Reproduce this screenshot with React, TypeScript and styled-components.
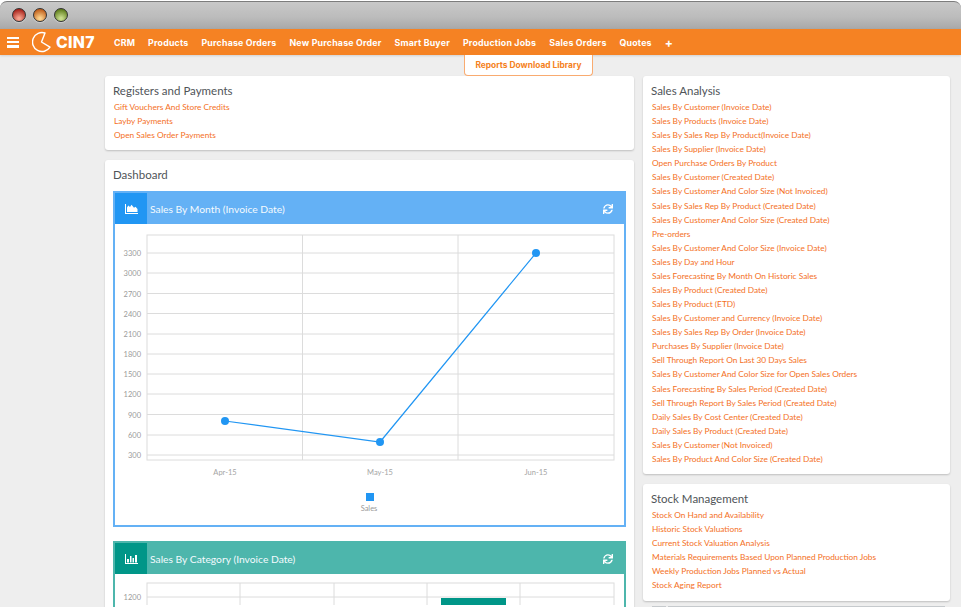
import React from "react";
import styled, { createGlobalStyle } from "styled-components";
import { FaSync } from "react-icons/fa";

const Global = createGlobalStyle`
  html, body { margin: 0; padding: 0; height: 607px; overflow: hidden; background: #ffffff; }
  body { font-family: "Lato", "Liberation Sans", sans-serif; }
  * { box-sizing: border-box; }
`;

const Page = styled.div`
  width: 961px;
  height: 607px;
  overflow: hidden;
  display: flex;
  flex-direction: column;
  background: #ffffff;
`;

const TitleBar = styled.div`
  height: 28px;
  margin-top: 1px;
  flex: none;
  display: flex;
  align-items: center;
  gap: 6px;
  padding: 0 0 1px 12px;
  border-top: 1px solid #7c7c7c;
  border-radius: 7px 7px 0 0;
  background: linear-gradient(#c8c8c8, #bcbcbc 55%, #a8a8a8);
`;

const Light = styled.span<{ $c: string; $d: string }>`
  width: 14px;
  height: 14px;
  border-radius: 50%;
  border: 1px solid #333333;
  box-shadow: 0 1px 1px rgba(255, 255, 255, 0.35);
  background: radial-gradient(circle at 50% 80%, ${(p) => p.$c} 10%, ${(p) => p.$d} 80%);
  margin-right: 1px;
`;

const NavBar = styled.nav`
  height: 26px;
  flex: none;
  display: flex;
  align-items: center;
  background: #f58223;
  position: relative;
  color: #fff;
  box-shadow: 0 1px 2px rgba(0, 0, 0, 0.12);
`;

const Burger = styled.div`
  width: 12px;
  margin-left: 7px;
  display: flex;
  flex-direction: column;
  gap: 1.75px;
  span {
    height: 2.5px;
    background: #fff;
    display: block;
  }
`;

const Brand = styled.div`
  display: flex;
  align-items: center;
  gap: 4px;
  margin-left: 13px;
  width: 82px;
  font-family: "Inter", "Liberation Sans", sans-serif;
  font-weight: 800;
  font-size: 15.8px;
  letter-spacing: 0.3px;
`;

const NavLinks = styled.div`
  display: flex;
  gap: 13px;
  align-items: center;
`;

const NavLink = styled.a`
  font-family: "Inter", "Liberation Sans", sans-serif;
  font-size: 8.8px;
  font-weight: 700;
  letter-spacing: 0.2px;
  white-space: nowrap;
`;

const Plus = styled(NavLink)`
  font-size: 12px;
`;

const Tab = styled.div`
  position: absolute;
  top: 26px;
  left: 464px;
  width: 129px;
  height: 21px;
  background: #fff;
  border: 1px solid #f9ab70;
  border-top: none;
  border-radius: 0 0 4px 4px;
  color: #f58223;
  font-family: "Inter", "Liberation Sans", sans-serif;
  font-size: 8.4px;
  font-weight: 700;
  display: flex;
  align-items: center;
  justify-content: center;
  z-index: 2;
`;

const Content = styled.main`
  flex: 1;
  display: flex;
  gap: 9px;
  padding: 21px 0 0 105px;
  align-items: flex-start;
  background: #eeeeee;
`;

const Column = styled.div<{ $w: number }>`
  width: ${(p) => p.$w}px;
  flex: none;
  display: flex;
  flex-direction: column;
  gap: 10px;
`;

const Card = styled.section`
  background: #fff;
  border-radius: 3px;
  box-shadow: 0 1px 2px rgba(0, 0, 0, 0.2);
  padding: 6px 8px 8px;
`;

const CardTitle = styled.h3`
  margin: 0 0 1px;
  font-size: 11.5px;
  line-height: 17px;
  font-weight: 400;
  color: #4f5458;
  height: 17px;
`;

const LinkList = styled.div`
  display: flex;
  flex-direction: column;
`;

const ReportLink = styled.a`
  font-size: 8.3px;
  line-height: 14.08px;
  height: 14.08px;
  color: #f4701e;
  padding-left: 1px;
  white-space: nowrap;
`;

const Dash = styled(Card)`
  height: 470px;
  padding-bottom: 0;
`;

const DashTitle = styled(CardTitle)`
  margin: 0 0 8px;
`;

const Widget = styled.div<{ $c: string; $h: number }>`
  border: 2px solid ${(p) => p.$c};
  height: ${(p) => p.$h}px;
  margin-bottom: 14px;
  background: #fff;
`;

const WidgetHeader = styled.div<{ $c: string }>`
  height: 31px;
  background: ${(p) => p.$c};
  display: flex;
  align-items: center;
  color: #fff;
  padding-right: 11px;
`;

const IconBox = styled.div<{ $c: string }>`
  width: 32px;
  height: 31px;
  background: ${(p) => p.$c};
  display: flex;
  align-items: center;
  justify-content: center;
  margin-right: 3px;
`;

const WidgetTitle = styled.span`
  flex: 1;
  font-size: 10.3px;
  color: #f4fafe;
`;

const ChartSvg = styled.svg`
  display: block;
  font-family: "Lato", "Liberation Sans", sans-serif;
`;

const NextCardEdge = styled.div`
  display: flex;
  gap: 2px;
  height: 2px;
  padding: 0 5px 0 9px;
  margin-top: -5px;
  span {
    background: #c6cacd;
    flex: 1;
  }
  span:first-child {
    flex: none;
    width: 14px;
  }
`;

const registers = ["Gift Vouchers And Store Credits", "Layby Payments", "Open Sales Order Payments"];
const sales = [
  "Sales By Customer (Invoice Date)", "Sales By Products (Invoice Date)", "Sales By Sales Rep By Product(Invoice Date)",
  "Sales By Supplier (Invoice Date)", "Open Purchase Orders By Product", "Sales By Customer (Created Date)",
  "Sales By Customer And Color Size (Not Invoiced)", "Sales By Sales Rep By Product (Created Date)",
  "Sales By Customer And Color Size (Created Date)", "Pre-orders", "Sales By Customer And Color Size (Invoice Date)",
  "Sales By Day and Hour", "Sales Forecasting By Month On Historic Sales", "Sales By Product (Created Date)",
  "Sales By Product (ETD)", "Sales By Customer and Currency (Invoice Date)", "Sales By Sales Rep By Order (Invoice Date)",
  "Purchases By Supplier (Invoice Date)", "Sell Through Report On Last 30 Days Sales",
  "Sales By Customer And Color Size for Open Sales Orders", "Sales Forecasting By Sales Period (Created Date)",
  "Sell Through Report By Sales Period (Created Date)", "Daily Sales By Cost Center (Created Date)",
  "Daily Sales By Product (Created Date)", "Sales By Customer (Not Invoiced)", "Sales By Product And Color Size (Created Date)",
];
const stock = [
  "Stock On Hand and Availability", "Historic Stock Valuations", "Current Stock Valuation Analysis",
  "Materials Requirements Based Upon Planned Production Jobs", "Weekly Production Jobs Planned vs Actual", "Stock Aging Report",
];
const nav = ["CRM", "Products", "Purchase Orders", "New Purchase Order", "Smart Buyer", "Production Jobs", "Sales Orders", "Quotes"];

const Logo = () => (
  <svg width="20" height="22" viewBox="0 0 20 22" fill="none" stroke="#fff" strokeWidth="1.4" strokeLinejoin="round">
    <path d="M13 2 A9.500 9.500 0 1 0 18 16.200 L9.500 11 Z" />
  </svg>
);

const grid = "#dcdcdc";
const ys: [number, string][] = [
  [253, "3300"], [273, "3000"], [293.5, "2700"], [313.5, "2400"], [334, "2100"], [354, "1800"],
  [374, "1500"], [394, "1200"], [414.5, "900"], [435, "600"], [455, "300"],
];

/* coordinates are page pixels; the svg is shifted by its origin (115, 224) */
const SalesChart = () => (
  <ChartSvg width="509" height="301" viewBox="115 224 509 301">
    <rect x="147" y="235" width="467" height="225" fill="none" stroke={grid} />
    {[302.5, 458].map((x) => <line key={x} x1={x} x2={x} y1="235" y2="460" stroke={grid} />)}
    {ys.map(([y, l]) => (
      <g key={l}>
        <line x1="147" x2="614" y1={y} y2={y} stroke={grid} />
        <text x="141" y={y + 3} textAnchor="end" fontSize="7.5" fill="#9a9a9a">{l}</text>
      </g>
    ))}
    {[["Apr-15", 225], ["May-15", 380], ["Jun-15", 536]].map(([l, x]) => (
      <text key={l} x={x} y="475" textAnchor="middle" fontSize="7.5" fill="#a5a5a5">{l}</text>
    ))}
    <polyline points="225,421 380,442 536,253" fill="none" stroke="#2196f3" strokeWidth="1.2" />
    {[[225, 421], [380, 442], [536, 253]].map(([x, y]) => <circle key={x} cx={x} cy={y} r="4" fill="#2196f3" />)}
    <rect x="366" y="493" width="8" height="8" fill="#2196f3" />
    <text x="369" y="511" textAnchor="middle" fontSize="7.5" fill="#9a9a9a">Sales</text>
  </ChartSvg>
);

const CategoryChart = () => (
  <ChartSvg width="509" height="31" viewBox="115 576 509 31">
    <rect x="147" y="585" width="467" height="40" fill="none" stroke={grid} />
    {[240, 334, 427, 520].map((x) => <line key={x} x1={x} x2={x} y1="585" y2="607" stroke={grid} />)}
    <line x1="147" x2="614" y1="599" y2="599" stroke={grid} />
    <text x="141" y="602" textAnchor="end" fontSize="7.5" fill="#9a9a9a">1200</text>
    <rect x="441" y="600" width="65" height="7" fill="#009688" />
  </ChartSvg>
);

export default function App() {
  return (
    <Page>
      <Global />
      <TitleBar>
        <Light $c="#f5a08c" $d="#a8221a" />
        <Light $c="#fbd08a" $d="#c05e1a" />
        <Light $c="#c8dc8c" $d="#5f7e1c" />
      </TitleBar>
      <NavBar>
        <Burger><span /><span /><span /></Burger>
        <Brand><Logo />CIN7</Brand>
        <NavLinks>
          {nav.map((n) => <NavLink key={n}>{n}</NavLink>)}
          <Plus>+</Plus>
        </NavLinks>
        <Tab>Reports Download Library</Tab>
      </NavBar>
      <Content>
        <Column $w={529}>
          <Card>
            <CardTitle>Registers and Payments</CardTitle>
            <LinkList>{registers.map((t) => <ReportLink key={t}>{t}</ReportLink>)}</LinkList>
          </Card>
          <Dash>
            <DashTitle>Dashboard</DashTitle>
            <Widget $c="#64b1f5" $h={336}>
              <WidgetHeader $c="#64b1f5">
                <IconBox $c="#2196f3">
                  <svg width="13" height="10" viewBox="0 0 13 10" fill="#fff">
                    <path d="M0 0h1v9h12v1H0z" />
                    <path d="M2 8V3.500L3.300 1.500 5 3 6.500 .8 9 3.800 10.500 2.800 12.500 5V8z" />
                  </svg>
                </IconBox>
                <WidgetTitle>Sales By Month (Invoice Date)</WidgetTitle>
                <FaSync size={10} color="#fff" />
              </WidgetHeader>
              <SalesChart />
            </Widget>
            <Widget $c="#4db6ac" $h={80}>
              <WidgetHeader $c="#4db6ac">
                <IconBox $c="#009688">
                  <svg width="13" height="10" viewBox="0 0 13 10" fill="#fff">
                    <path d="M0 0h1v9h12v1H0z" />
                    <path d="M2 5h2v3.500H2zM5 2h1.500v6.500H5zM7.500 4H9v4.500H7.500zM10 1h2v7.500h-2z" />
                  </svg>
                </IconBox>
                <WidgetTitle>Sales By Category (Invoice Date)</WidgetTitle>
                <FaSync size={10} color="#fff" />
              </WidgetHeader>
              <CategoryChart />
            </Widget>
          </Dash>
        </Column>
        <Column $w={307}>
          <Card>
            <CardTitle>Sales Analysis</CardTitle>
            <LinkList>{sales.map((t) => <ReportLink key={t}>{t}</ReportLink>)}</LinkList>
          </Card>
          <Card>
            <CardTitle>Stock Management</CardTitle>
            <LinkList>{stock.map((t) => <ReportLink key={t}>{t}</ReportLink>)}</LinkList>
          </Card>
          <NextCardEdge><span /><span /></NextCardEdge>
        </Column>
      </Content>
    </Page>
  );
}
